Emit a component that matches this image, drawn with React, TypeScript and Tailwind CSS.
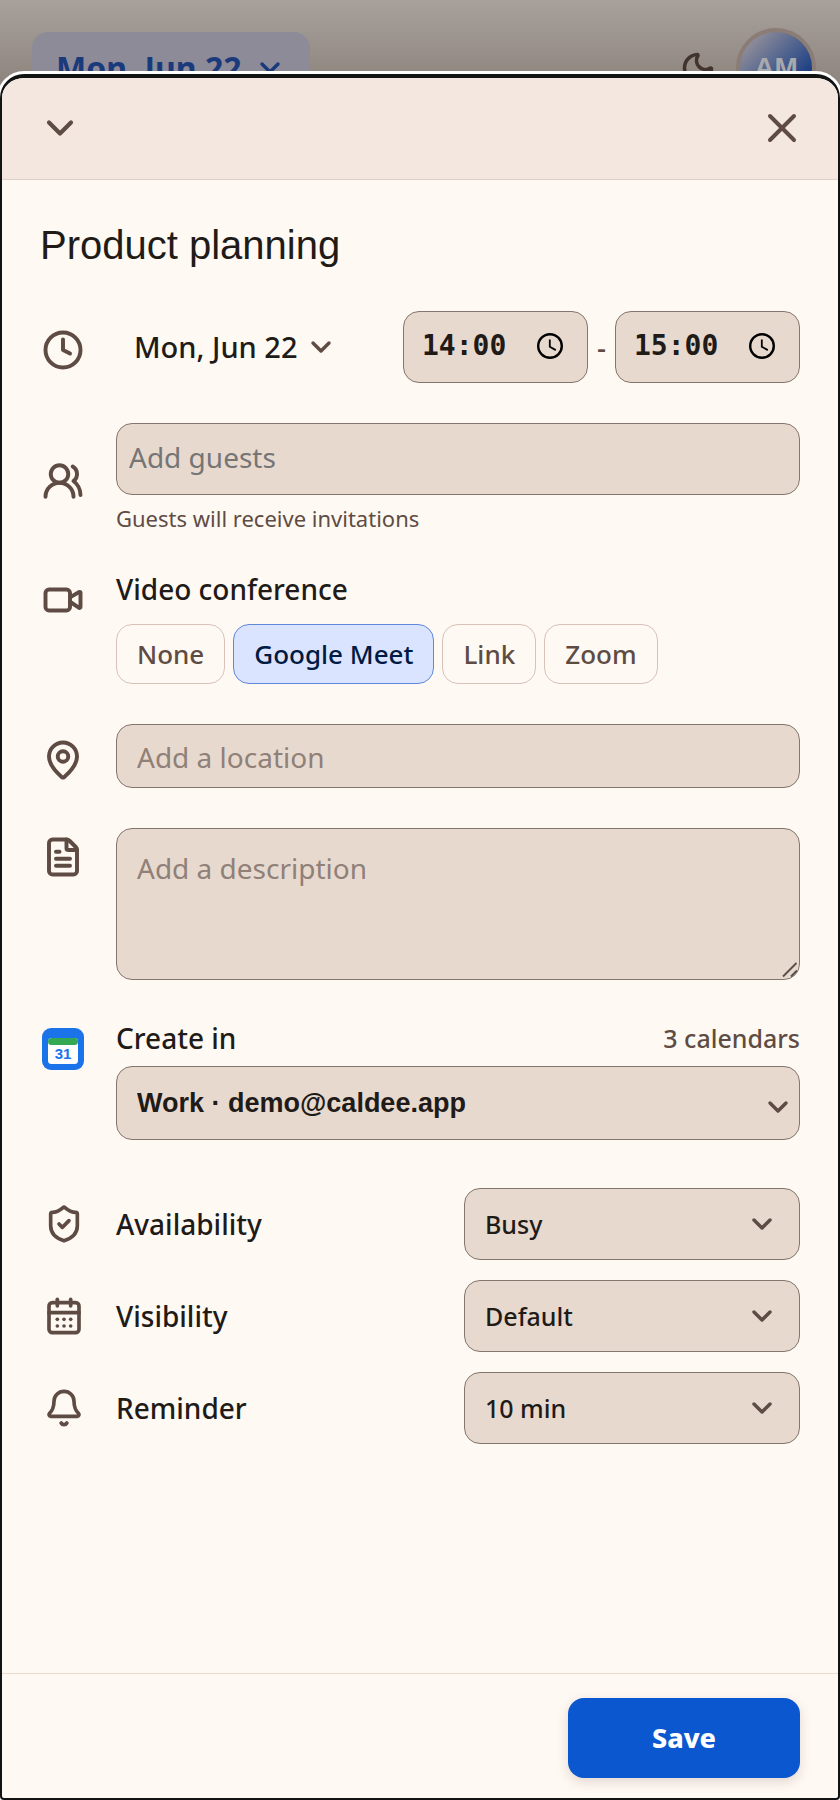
import { useState } from 'react';
import type { ReactNode } from 'react';
import {
  Bell,
  CalendarDays,
  ChevronDown,
  Clock,
  FileText,
  MapPin,
  Moon,
  ShieldCheck,
  UsersRound,
  Video,
  X,
} from 'lucide-react';

type Conference = 'None' | 'Google Meet' | 'Link' | 'Zoom';

const CONFERENCES: Conference[] = ['None', 'Google Meet', 'Link', 'Zoom'];

const FIELD = 'w-full rounded-2xl border border-[#84766e] bg-[#e8d9cf] text-[#211b18] outline-none';

interface RowProps {
  icon: ReactNode;
  iconClass?: string;
  children: ReactNode;
}

function Row({ icon, iconClass = '', children }: RowProps) {
  return (
    <div className="flex gap-8">
      <div className={`flex w-11 shrink-0 justify-end text-[#5e4c44] ${iconClass}`}>{icon}</div>
      <div className="min-w-0 flex-1">{children}</div>
    </div>
  );
}

interface TimeFieldProps {
  label: string;
  value: string;
  onChange: (value: string) => void;
}

function TimeField({ label, value, onChange }: TimeFieldProps) {
  return (
    <div className="relative w-[185px]">
      <input
        type="text"
        inputMode="numeric"
        aria-label={label}
        value={value}
        onChange={(e) => onChange(e.target.value)}
        className={`${FIELD} h-[72px] pr-14 pb-1 pl-[18px] font-['DejaVu_Sans_Mono',monospace] text-[28px] font-bold`}
      />
      <svg
        viewBox="0 0 28 28"
        fill="none"
        stroke="#000"
        className="pointer-events-none absolute top-[21px] right-6 size-7"
      >
        <circle cx="14" cy="14" r="11.8" strokeWidth="2.4" />
        <path d="M13.8 7.5v7.2l6 3.4" strokeWidth="1.8" />
      </svg>
    </div>
  );
}

interface OptionRowProps {
  id: string;
  label: string;
  icon: ReactNode;
  options: string[];
}

function OptionRow({ id, label, icon, options }: OptionRowProps) {
  return (
    <div className="flex items-center gap-8">
      <div className="flex w-11 shrink-0 justify-end text-[#5e4c44]">{icon}</div>
      <label htmlFor={id} className="flex-1 text-[28px] font-medium">
        {label}
      </label>
      <div className="relative w-[336px]">
        <select id={id} className={`${FIELD} h-[72px] appearance-none pt-[2px] pr-16 pl-5 text-[25px] font-medium`}>
          {options.map((option) => (
            <option key={option}>{option}</option>
          ))}
        </select>
        <ChevronDown
          strokeWidth={2.6}
          className="pointer-events-none absolute top-5 right-[22px] size-8 text-[#5e4c44]"
        />
      </div>
    </div>
  );
}

function GoogleCalendarIcon() {
  return (
    <svg viewBox="0 0 42 42" className="size-[42px]">
      <rect width="42" height="42" rx="9" fill="#1a73e8" />
      <rect x="6" y="10" width="30" height="26" rx="3.5" fill="#fff" />
      <path d="M9.5 10h23a3.5 3.5 0 0 1 0 7h-23a3.5 3.5 0 0 1 0-7z" fill="#34a853" />
      <text
        x="21"
        y="31"
        textAnchor="middle"
        fontSize="15"
        fontWeight="700"
        fontFamily="Liberation Sans, sans-serif"
        fill="#1a73e8"
      >
        31
      </text>
    </svg>
  );
}

function PageHeader() {
  return (
    <header className="absolute inset-x-0 top-0 flex h-28 items-start justify-between bg-linear-to-b from-[#a8a19b] to-[#857b75] px-6 pt-7 pl-8">
      <button
        type="button"
        className="mt-1 flex h-[72px] items-center gap-3 rounded-2xl bg-[#8d8b98] px-6 text-[32px] font-bold text-[#1a3a7c]"
      >
        Mon, Jun 22
        <ChevronDown className="size-8" strokeWidth={2.6} />
      </button>
      <div className="flex items-center gap-5">
        <button type="button" aria-label="Toggle theme" className="text-[#42342d]">
          <Moon className="size-9" strokeWidth={2.4} />
        </button>
        <div className="flex size-20 items-center justify-center rounded-full border-4 border-[#8b7d75] bg-linear-to-br from-[#8d8b98] from-15% to-[#1c3f83] to-75% font-['Liberation_Sans',sans-serif] text-[28px] font-bold text-[#a9a8ab]">
          AM
        </div>
      </div>
    </header>
  );
}

export default function App() {
  const [title, setTitle] = useState('Product planning');
  const [start, setStart] = useState('14:00');
  const [end, setEnd] = useState('15:00');
  const [conference, setConference] = useState<Conference>('Google Meet');

  return (
    <div className="relative flex min-h-screen flex-col overflow-hidden bg-[#8d847e] pt-[74px] font-['Noto_Sans',sans-serif] text-[#211b18]">
      <PageHeader />

      <div
        role="dialog"
        aria-label="Event"
        className="relative flex flex-1 flex-col overflow-hidden rounded-t-3xl rounded-b-sm border-2 border-t-4 border-[#111413] bg-[#fff9f3] shadow-[0_0_0_3px_#fff]"
      >
        <div className="flex h-[102px] items-center justify-between border-b border-[#e0d0c8] bg-[#f3e7df] pr-8 pb-[2px] pl-9 text-[#5e4c44]">
          <button type="button" aria-label="Collapse">
            <ChevronDown className="size-11" strokeWidth={2.3} />
          </button>
          <button type="button" aria-label="Close">
            <X className="size-12" />
          </button>
        </div>

        <div className="flex flex-1 flex-col px-[38px] pt-[37px]">
          <input
            type="text"
            aria-label="Title"
            value={title}
            onChange={(e) => setTitle(e.target.value)}
            className="h-14 w-full bg-transparent font-['Liberation_Sans',sans-serif] text-[40px] outline-none"
          />

          <div className="mt-[38px] flex flex-col gap-10">
            <Row icon={<Clock className="size-[42px]" strokeWidth={2.25} />} iconClass="pt-[18px]">
              <div className="flex items-center justify-between">
                <button type="button" className="flex h-[72px] items-center gap-2 px-[18px] text-[29px] font-medium">
                  Mon, Jun 22
                  <ChevronDown className="size-8 text-[#5e4c44]" strokeWidth={2.6} />
                </button>
                <div className="flex items-center gap-[9px] text-[28px] font-medium text-[#5e4c44]">
                  <TimeField label="Start time" value={start} onChange={setStart} />
                  <span>-</span>
                  <TimeField label="End time" value={end} onChange={setEnd} />
                </div>
              </div>
            </Row>

            <Row icon={<UsersRound className="size-[42px]" strokeWidth={2.25} />} iconClass="pt-[37px]">
              <input
                type="text"
                aria-label="Guests"
                placeholder="Add guests"
                className={`${FIELD} h-[72px] px-3 pb-1 text-[28px] placeholder:text-[#757575]`}
              />
              <p className="mt-[9px] text-[22px] leading-7 text-[#5e4c44]">Guests will receive invitations</p>
            </Row>

            <Row icon={<Video className="size-[42px]" strokeWidth={2.25} />} iconClass="pt-[7px]">
              <h2 className="text-[28px] leading-[34px] font-medium">Video conference</h2>
              <div className="mt-[18px] flex gap-2">
                {CONFERENCES.map((item) => (
                  <button
                    key={item}
                    type="button"
                    onClick={() => setConference(item)}
                    aria-pressed={item === conference}
                    className={`h-[60px] rounded-2xl border px-5 text-[26px] font-medium ${
                      item === conference
                        ? 'border-[#5f87dc] bg-[#dbe4ff] text-[#001a43]'
                        : 'border-[#d8c2b9] text-[#5e4c44]'
                    }`}
                  >
                    {item}
                  </button>
                ))}
              </div>
            </Row>

            <Row icon={<MapPin className="size-[42px]" strokeWidth={2.25} />} iconClass="pt-[15px]">
              <input
                type="text"
                aria-label="Location"
                placeholder="Add a location"
                className={`${FIELD} h-16 px-5 pt-[2px] text-[28px] placeholder:text-[#8f8078]`}
              />
            </Row>

            <Row icon={<FileText className="size-[42px]" strokeWidth={2.25} />} iconClass="pt-2">
              <div className="relative">
                <textarea
                  aria-label="Description"
                  placeholder="Add a description"
                  className={`${FIELD} block h-[152px] resize-none px-5 py-[19px] text-[28px] leading-10 placeholder:text-[#8f8078]`}
                />
                <svg
                  viewBox="0 0 16 16"
                  fill="none"
                  stroke="#5b514c"
                  strokeWidth="2"
                  className="pointer-events-none absolute right-[2px] bottom-[2px] size-4"
                >
                  <path d="M1 14.5 14.5 1M9 14.5l6-6" />
                </svg>
              </div>
            </Row>

            <Row icon={<GoogleCalendarIcon />} iconClass="pt-2">
              <div className="flex items-center justify-between">
                <label htmlFor="calendar" className="text-[28px] leading-9 font-medium">
                  Create in
                </label>
                <span className="text-[25px] leading-9 font-medium text-[#5e4c44]">3 calendars</span>
              </div>
              <div className="relative mt-[10px]">
                <select
                  id="calendar"
                  className={`${FIELD} h-[74px] appearance-none pr-16 pl-5 font-['Liberation_Sans',sans-serif] text-[27px] font-bold`}
                >
                  <option>Work · demo@caldee.app</option>
                </select>
                <ChevronDown
                  strokeWidth={2.6}
                  className="pointer-events-none absolute top-[25px] right-[6px] size-8 text-[#5e4c44]"
                />
              </div>
            </Row>
          </div>

          <div className="mt-12 flex flex-col gap-5">
            <OptionRow
              id="availability"
              label="Availability"
              icon={<ShieldCheck className="size-10" strokeWidth={2.2} />}
              options={['Busy', 'Free']}
            />
            <OptionRow
              id="visibility"
              label="Visibility"
              icon={<CalendarDays className="size-10" strokeWidth={2.2} />}
              options={['Default', 'Public', 'Private']}
            />
            <OptionRow
              id="reminder"
              label="Reminder"
              icon={<Bell className="size-10" strokeWidth={2.2} />}
              options={['10 min', '30 min', '1 hour']}
            />
          </div>
        </div>

        <footer className="flex justify-end border-t border-[#ecd9d0] px-[38px] pt-6 pb-5">
          <button
            type="button"
            className="h-20 w-[232px] rounded-2xl bg-[#0b57d0] text-[27px] font-extrabold text-white shadow-[0_4px_12px_rgba(90,60,50,0.18)]"
          >
            Save
          </button>
        </footer>
      </div>
    </div>
  );
}
